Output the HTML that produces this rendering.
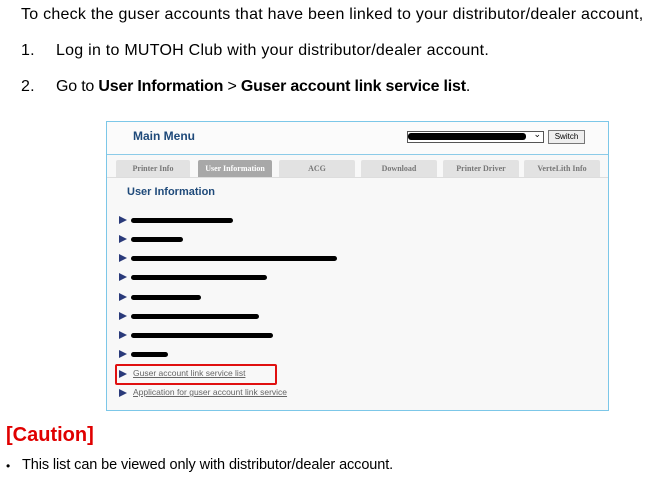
<!DOCTYPE html>
<html><head><meta charset="utf-8"><style>
body{margin:0;width:670px;height:485px;background:#fff;font-family:"Liberation Sans",sans-serif;position:relative;overflow:hidden;color:#000}
.t{position:absolute;font-size:16px;white-space:nowrap;letter-spacing:0.25px}
.box{position:absolute;left:106px;top:121px;width:501px;height:288px;border:1px solid #7cc7e8;background:#f8f8f8}
.hdr{position:absolute;left:0;top:0;width:501px;height:32px;border-bottom:1px solid #8ccbe8;background:#fbfbfb}
.tab{position:absolute;top:38px;height:17px;background:#e2e2e2;border-radius:2px 2px 0 0;font-size:8px;font-weight:bold;color:#777;text-align:center;line-height:17px;font-family:"Liberation Serif",serif}
.bar{position:absolute;height:5px;background:#000;border-radius:3px;left:24px}
.ar{position:absolute;left:12px;width:0;height:0;border-left:8px solid #2a3a7a;border-top:4px solid transparent;border-bottom:4px solid transparent}
.lk{position:absolute;left:26px;font-size:8.5px;color:#666;text-decoration:underline}
</style></head><body>
<div class="t" style="left:21px;top:6px">To check the guser accounts that have been linked to your distributor/dealer account,</div>
<div class="t" style="left:21px;top:42px">1.</div>
<div class="t" style="left:56px;top:42px">Log in to MUTOH Club with your distributor/dealer account.</div>
<div class="t" style="left:21px;top:78px">2.</div>
<div class="t" style="left:56px;top:78px;letter-spacing:-0.2px">Go to <b>User Information</b> &gt; <b>Guser account link service list</b>.</div>
<div class="box">
 <div class="hdr">
  <div style="position:absolute;left:26px;top:7px;font-size:12px;font-weight:bold;color:#1f4a7a">Main Menu</div>
  <div style="position:absolute;left:300px;top:9px;width:135px;height:10px;border:1px solid #555;background:#fff"><div style="position:absolute;left:0;top:1px;width:118px;height:7px;background:#000;border-radius:3px"></div><div style="position:absolute;right:2px;top:-3px;font-size:9px">⌄</div></div>
  <div style="position:absolute;left:441px;top:8px;width:35px;height:12px;border:1px solid #777;background:#eee;font-size:8px;text-align:center;line-height:12px">Switch</div>
 </div>
 <div class="tab" style="left:9px;width:74px">Printer Info</div>
 <div class="tab" style="left:91px;width:74px;background:#a8a8a8;color:#fff">User Information</div>
 <div class="tab" style="left:172px;width:76px">ACG</div>
 <div class="tab" style="left:254px;width:76px">Download</div>
 <div class="tab" style="left:336px;width:76px">Printer Driver</div>
 <div class="tab" style="left:417px;width:76px">VerteLith Info</div>
 <div style="position:absolute;left:0;top:55px;width:501px;border-top:1px solid #ddd"></div>
 <div style="position:absolute;left:20px;top:64px;font-size:11px;font-weight:bold;color:#1f4a7a">User Information</div>
 <div class="ar" style="top:94px"></div><div class="bar" style="top:96px;width:102px"></div>
 <div class="ar" style="top:113px"></div><div class="bar" style="top:115px;width:52px"></div>
 <div class="ar" style="top:132px"></div><div class="bar" style="top:134px;width:206px"></div>
 <div class="ar" style="top:151px"></div><div class="bar" style="top:153px;width:136px"></div>
 <div class="ar" style="top:171px"></div><div class="bar" style="top:173px;width:70px"></div>
 <div class="ar" style="top:190px"></div><div class="bar" style="top:192px;width:128px"></div>
 <div class="ar" style="top:209px"></div><div class="bar" style="top:211px;width:142px"></div>
 <div class="ar" style="top:228px"></div><div class="bar" style="top:230px;width:37px"></div>
 <div class="ar" style="top:248px"></div><div class="lk" style="top:246px">Guser account link service list</div>
 <div style="position:absolute;left:8px;top:242px;width:158px;height:17px;border:2px solid #e01010;border-radius:2px"></div>
 <div class="ar" style="top:267px"></div><div class="lk" style="top:265px">Application for guser account link service</div>
</div>
<div style="position:absolute;left:6px;top:424px;font-size:20px;font-weight:bold;color:#e00000">[Caution]</div>
<div style="position:absolute;left:6px;top:459px;font-size:12px">•</div>
<div style="position:absolute;left:22px;top:457px;font-size:14.5px;letter-spacing:-0.1px">This list can be viewed only with distributor/dealer account.</div>
</body></html>
